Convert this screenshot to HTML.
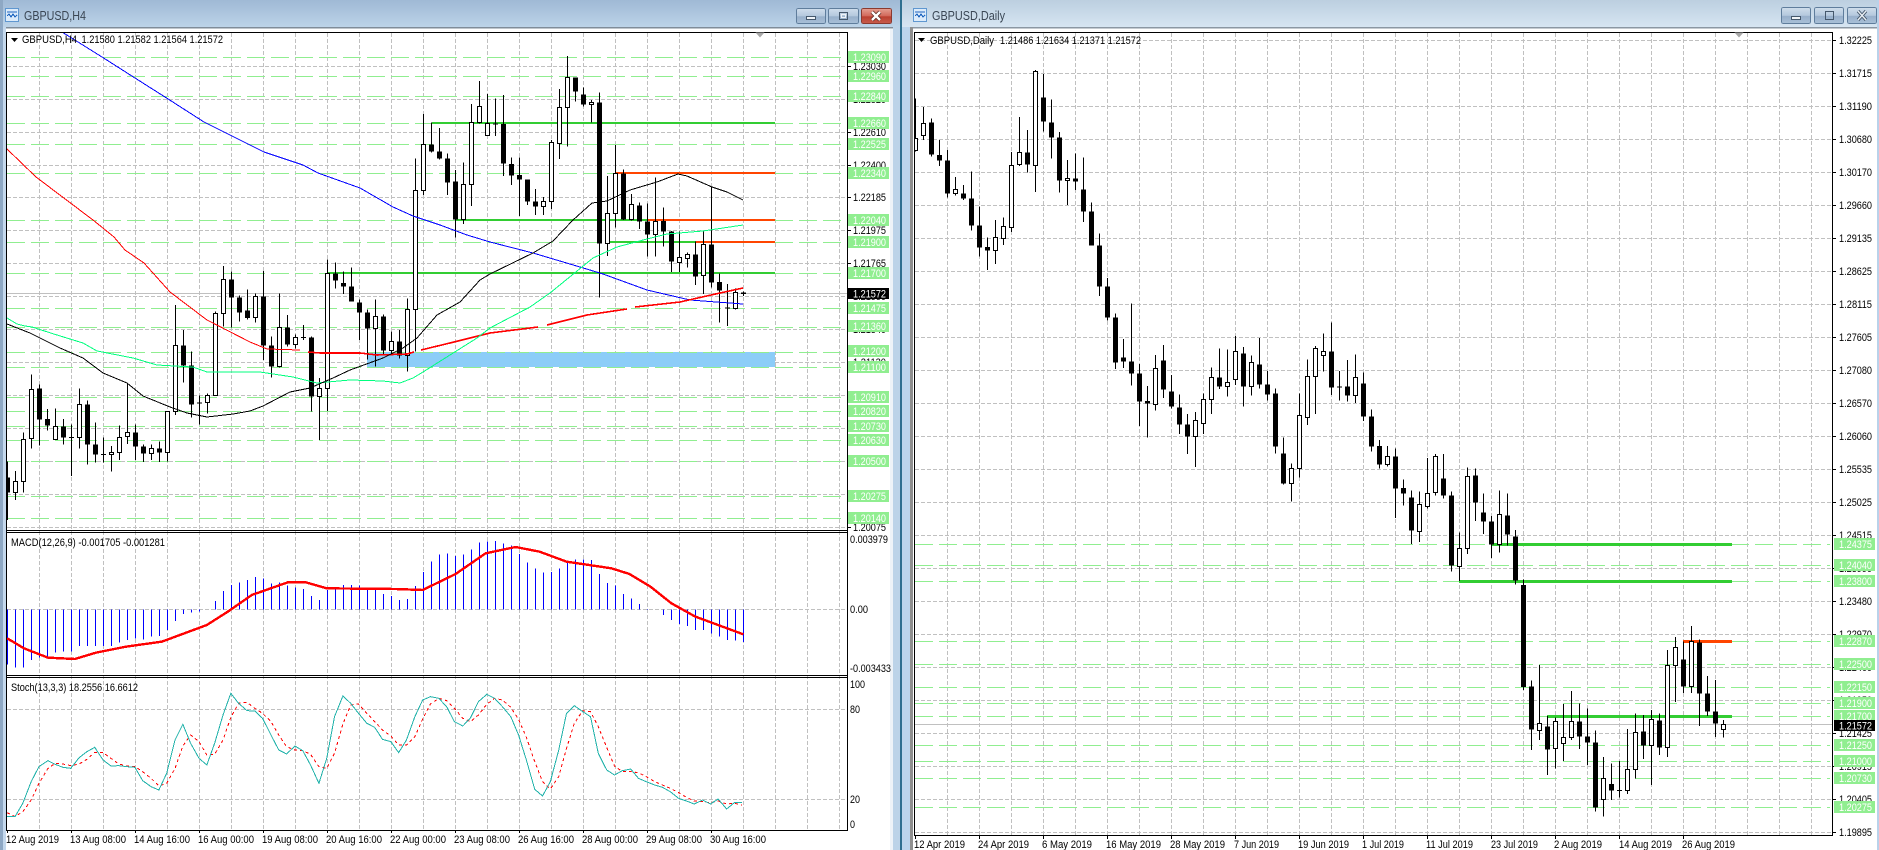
<!DOCTYPE html>
<html><head><meta charset="utf-8"><title>GBPUSD</title>
<style>
html,body{margin:0;padding:0;background:#fff;width:1879px;height:850px;overflow:hidden}
svg{position:absolute;left:0;top:0;display:block}
text{font-family:"Liberation Sans",Arial,sans-serif;font-size:11px;fill:#000}
.tt{font-size:12.5px;fill:#3a4654}
.w text{fill:#fff}
.ne path{vector-effect:non-scaling-stroke;fill:none}
.ne path.h{fill:#fff}
</style></head><body>
<svg width="1879" height="850" viewBox="0 0 1879 850" shape-rendering="crispEdges">
<defs>
<linearGradient id="t1" x1="0" y1="0" x2="0" y2="1"><stop offset="0" stop-color="#9fb9d5"/><stop offset="1" stop-color="#bcd3e8"/></linearGradient>
<linearGradient id="t2" x1="0" y1="0" x2="0" y2="1"><stop offset="0" stop-color="#bccfe0"/><stop offset="1" stop-color="#d6e5f2"/></linearGradient>
<linearGradient id="b1" x1="0" y1="0" x2="0" y2="1"><stop offset="0" stop-color="#d0deec"/><stop offset=".5" stop-color="#b4c8dd"/><stop offset=".55" stop-color="#98b0cb"/><stop offset="1" stop-color="#a9c0d8"/></linearGradient>
<linearGradient id="b2" x1="0" y1="0" x2="0" y2="1"><stop offset="0" stop-color="#e4a093"/><stop offset=".5" stop-color="#d2685a"/><stop offset=".55" stop-color="#bb4030"/><stop offset="1" stop-color="#c85c4c"/></linearGradient>
<clipPath id="cl"><rect x="7" y="33" width="840" height="497"/></clipPath>
<clipPath id="cr"><rect x="915" y="33" width="917" height="802"/></clipPath>
</defs>
<rect width="1879" height="850" fill="#fff"/>
<!-- left window frame -->
<rect x="0" y="0" width="900" height="27" fill="url(#t1)"/>
<rect x="0" y="27" width="900" height="1.5" fill="#7f8c99"/>
<rect x="0" y="0" width="3" height="850" fill="#8ea8c4"/>
<rect x="3" y="27" width="3" height="823" fill="#c4d8ec"/>
<rect x="893" y="27" width="7" height="823" fill="#bcd3e8"/>
<rect x="890" y="29" width="3" height="821" fill="#eef3f8"/>
<!-- right window frame -->
<rect x="900" y="0" width="979" height="27" fill="url(#t2)"/>
<rect x="900" y="27" width="979" height="1.5" fill="#8b97a3"/>
<rect x="900" y="0" width="2" height="850" fill="#2f6f8f"/>
<rect x="902" y="27" width="8" height="823" fill="#bcd5ec"/>
<rect x="910" y="27" width="3" height="823" fill="#8f8f8f"/>
<rect x="1877" y="0" width="2" height="850" fill="#b9d2ea"/>

<!-- title icons -->
<g>
<rect x="5.5" y="8.5" width="13" height="13" fill="#dcebfa" stroke="#5f97d0"/>
<path d="M7 12h10M7 16l2-2 2 3 2-3 2 3 2-2" fill="none" stroke="#1f66c0"/>
<rect x="913.5" y="8.5" width="13" height="13" fill="#dcebfa" stroke="#5f97d0"/>
<path d="M915 12h10M915 16l2-2 2 3 2-3 2 3 2-2" fill="none" stroke="#1f66c0"/>
</g>
<text class="tt" x="24" y="20" textLength="62" lengthAdjust="spacingAndGlyphs">GBPUSD,H4</text>
<text class="tt" x="932" y="20" textLength="73" lengthAdjust="spacingAndGlyphs">GBPUSD,Daily</text>

<!-- window buttons -->
<g stroke="#5f7d9c">
<rect x="796.5" y="8.5" width="29" height="15" rx="2" fill="url(#b1)"/>
<rect x="828.5" y="8.5" width="30" height="15" rx="2" fill="url(#b1)"/>
<rect x="861.5" y="8.5" width="30" height="15" rx="2" fill="url(#b2)" stroke="#8a3a30"/>
<rect x="1781.5" y="7.5" width="29" height="16" rx="2" fill="url(#b1)"/>
<rect x="1814.5" y="7.5" width="29" height="16" rx="2" fill="url(#b1)"/>
<rect x="1847.5" y="7.5" width="29" height="16" rx="2" fill="url(#b1)"/>
</g>
<g fill="#f0f4f8" stroke="#45586c">
<rect x="806.5" y="16.5" width="9" height="3"/>
<rect x="839.5" y="12.5" width="8" height="7" fill="none"/><rect x="841.5" y="14.5" width="4" height="3" fill="none" stroke="#f0f4f8"/>
<rect x="1791.5" y="16.5" width="9" height="3"/>
<rect x="1825.5" y="11.5" width="8" height="8" fill="none"/>
</g>
<g fill="none" shape-rendering="auto">
<path d="M872 12l8 8M880 12l-8 8" stroke="#5a2a24" stroke-width="4"/>
<path d="M872 12l8 8M880 12l-8 8" stroke="#fff" stroke-width="2.4"/>
<path d="M1858 11l8 9M1866 11l-8 9" stroke="#45586c" stroke-width="3.2"/>
<path d="M1858 11l8 9M1866 11l-8 9" stroke="#e8eef4" stroke-width="1.4"/>
</g>

<!-- LEFT CHART grid -->
<g fill="none" stroke="#c0c0c0" stroke-dasharray="4 2">
<path d="M7 66.5H847M7 99.5H847M7 132.5H847M7 165.5H847M7 197.5H847M7 230.5H847M7 263.5H847M7 296.5H847M7 329.5H847M7 362.5H847M7 395.5H847M7 428.5H847M7 461.5H847M7 494.5H847M7 527.5H847M7 609.5H847M7 709.5H847M7 799.5H847"/>
<path d="M39.5 33V830M71.5 33V830M103.5 33V830M135.5 33V830M167.5 33V830M199.5 33V830M231.5 33V830M263.5 33V830M295.5 33V830M327.5 33V830M359.5 33V830M391.5 33V830M423.5 33V830M455.5 33V830M487.5 33V830M519.5 33V830M551.5 33V830M583.5 33V830M615.5 33V830M647.5 33V830M679.5 33V830M711.5 33V830M743.5 33V830M775.5 33V830M807.5 33V830M839.5 33V830"/>
</g>
<path d="M7 293.5H847" stroke="#c0c0c0" fill="none"/>
<rect x="367" y="352" width="408" height="15" fill="#8ccdf8"/>
<path fill="none" stroke="#90ee90" stroke-dasharray="18 6" d="M7 57.5H843M7 76.5H843M7 96.5H843M7 123.5H843M7 144.5H843M7 173.5H843M7 220.5H843M7 242.5H843M7 273.5H843M7 308.5H843M7 327.5H843M7 352.5H843M7 367.5H843M7 397.5H843M7 411.5H843M7 426.5H843M7 440.5H843M7 461.5H843M7 496.5H843M7 518.5H843"/>
<g fill="#32cd32">
<rect x="432" y="122" width="343" height="2"/><rect x="456" y="219" width="192" height="2"/><rect x="607" y="241" width="89" height="2"/><rect x="327" y="272" width="448" height="2"/>
</g>
<g fill="#ff4500">
<rect x="616" y="172" width="159" height="2"/><rect x="648" y="219" width="127" height="2"/><rect x="696" y="241" width="79" height="2"/>
</g>

<g clip-path="url(#cl)">
<g class="ne" transform="translate(0 250) scale(1 .33333)">
<path stroke="#000" d="M7.5 635V810M15.5 663V750M23.5 547V728M31.5 373V596M39.5 403V587M47.5 477V542M55.5 475V568M63.5 507V584M71.5 523V678M79.5 415V596M87.5 451V644M95.5 517V638M103.5 562V638M111.5 588V665M119.5 526V630M127.5 400V582M135.5 523V630M143.5 583V636M151.5 583V630M159.5 574V636M167.5 484V634M175.5 165V495M183.5 240V398M191.5 304V503M199.5 436V524M207.5 430V491M215.5 184V436M223.5 48V230M231.5 64V232M239.5 137V215M247.5 118V208"/>
<path stroke="#000" style="stroke-width:5" d="M7.5 682V728M39.5 415V509M47.5 507V527M63.5 529V563M71.5 561V564M87.5 463V584M95.5 583V614M103.5 612V615M135.5 547V590M143.5 589V611M159.5 595V608M183.5 286V347M191.5 346V464M199.5 457V461M231.5 88V143M239.5 142V188M247.5 181V204"/>
<path class="h" stroke="#000" d="M13.5 694h4V728h-4zM21.5 568h4V694h-4zM29.5 418h4V565h-4zM53.5 529h4V568h-4zM77.5 463h4V563h-4zM109.5 607h4V613h-4zM117.5 562h4V607h-4zM125.5 547h4V560h-4zM149.5 595h4V611h-4zM165.5 484h4V608h-4zM173.5 286h4V484h-4zM205.5 436h4V458h-4zM213.5 190h4V436h-4zM221.5 88h4V190h-4z"/>
</g>
<g class="ne" transform="translate(0 100) scale(1 .33333)">
<path stroke="#000" d="M255.5 580V668M263.5 513V780M271.5 709V833M279.5 580V803M287.5 645V740M295.5 703V745M303.5 675V720M311.5 710V935M319.5 834V1020M327.5 478V933M335.5 487V566M343.5 514V582M351.5 502V605M359.5 598V720M367.5 628V778M375.5 598V800M383.5 643V765M391.5 694V760M399.5 690V776M407.5 595V815M415.5 175V755M423.5 42V285M431.5 68V158M439.5 84V178M447.5 160V285M455.5 210V413M463.5 187V372M471.5 12V318M479.5 -57V70M487.5 -18V108"/>
<path stroke="#000" style="stroke-width:5" d="M263.5 589V736M271.5 736V800M287.5 682V734M303.5 711V714M311.5 712V890M335.5 520V542M343.5 549V560M351.5 559V605M359.5 607V638M367.5 637V686M383.5 649V752M399.5 724V766M431.5 133V155M439.5 154V176M447.5 175V248M455.5 244V359"/>
<path class="h" stroke="#000" d="M253.5 589h4V652h-4zM277.5 682h4V800h-4zM293.5 712h4V733h-4zM317.5 865h4V890h-4zM325.5 520h4V865h-4zM373.5 649h4V685h-4zM389.5 724h4V751h-4zM405.5 628h4V766h-4zM413.5 271h4V628h-4zM421.5 133h4V271h-4zM461.5 253h4V358h-4zM469.5 68h4V253h-4zM477.5 19h4V68h-4zM485.5 70h4V106h-4z"/>
</g>
<g class="ne" transform="translate(0 50) scale(1 .33333)">
<path stroke="#000" d="M495.5 145V258M503.5 135V378M511.5 322V405M519.5 323V498M527.5 388V465M535.5 417V495M543.5 441V495M551.5 270V477M559.5 117V327M567.5 18V290M575.5 82V155M583.5 112V170M591.5 150V218M599.5 127V743M607.5 378V618M615.5 285V533M623.5 358V510M631.5 432V512M639.5 458V537M647.5 460V620M655.5 382V620M663.5 472V590M671.5 543V666M679.5 545V666M687.5 608V653M695.5 575V705M703.5 543V732M711.5 410V713M719.5 670V818M727.5 702V828M735.5 715V778M743.5 725V738"/>
<path stroke="#000" style="stroke-width:5" d="M495.5 220V224M503.5 222V341M511.5 342V377M519.5 375V389M527.5 388V455M535.5 454V470M575.5 82V125M583.5 133V164M599.5 157V580M623.5 370V509M639.5 466V515M647.5 514V554M663.5 513V545M671.5 544V635M695.5 613V680M711.5 583V698M719.5 696V722M727.5 772V776M743.5 727V732"/>
<path class="h" stroke="#000" d="M541.5 455h4V469h-4zM549.5 277h4V455h-4zM557.5 172h4V281h-4zM565.5 82h4V172h-4zM589.5 157h4V163h-4zM605.5 490h4V580h-4zM613.5 370h4V490h-4zM629.5 463h4V509h-4zM653.5 514h4V554h-4zM677.5 622h4V637h-4zM685.5 613h4V626h-4zM701.5 583h4V677h-4zM733.5 727h4V776h-4z"/>
</g>
<!-- moving averages -->
<path fill="none" stroke="#0000ff" d="M62 32L102 57L135 78L165 97L204 122L250 145L264 152L303 165L318 173L360 188L393 207L413 216L440 225L467 235L490 242L533 253L580 267L603 274L647 290L690 300L743 304"/>
<path fill="none" stroke="#ff0000" d="M7 149L36 177L93 220L114 237L125 250L144 263L170 292L207 320L250 342L267 349L300 350"/>
<path fill="none" stroke="#ff0000" stroke-width="1.6" d="M308 352L320 353L360 353L377 355L407 354L414 352M421 350L450 343L490 333L538 327M547 325L587 315L627 309M635 307L680 302L720 293L743 288"/>
<path fill="none" stroke="#00ff7f" d="M7 318L17 324L25 326L32 327L57 335L83 343L97 351L133 358L157 365L193 367L207 372L260 372L293 377L317 383L350 380L383 381L400 383L413 378L423 372L450 355L477 338L490 328L530 307L550 293L593 258L617 247L647 239L667 234L703 231L743 225"/>
<path fill="none" stroke="#000" d="M7 324L30 333L60 348L83 358L103 373L127 383L143 396L170 407L187 413L207 417L233 414L250 411L263 406L290 392L310 388L333 378L350 370L383 358L403 348L417 338L437 315L460 302L480 280L490 274L533 253L553 241L573 220L592 203L607 201L630 190L657 182L678 174L687 176L712 187L727 192L743 200"/>
</g>
<!-- MACD -->
<g class="ne" transform="translate(0 420) scale(1 .33333)">
<path stroke="#0000ff" d="M7.5 568V733M15.5 568V743M23.5 568V742M31.5 568V720M39.5 568V712M47.5 568V710M55.5 568V698M63.5 568V695M71.5 568V695M79.5 568V678M87.5 568V678M95.5 568V678M103.5 568V678M111.5 568V678M119.5 568V668M127.5 568V660M135.5 568V655M143.5 568V658M151.5 568V650M159.5 568V648M167.5 568V630M175.5 568V603M183.5 568V582M191.5 568V578M199.5 568V575M215.5 568V543M223.5 568V513M231.5 568V495M239.5 568V487M247.5 568V480M255.5 568V471M263.5 568V475M271.5 568V490M279.5 568V488M287.5 568V497M295.5 568V503M303.5 568V507M311.5 568V528M319.5 568V540M327.5 568V510M335.5 568V503M343.5 568V495M351.5 568V495M359.5 568V497M367.5 568V508M375.5 568V510M383.5 568V522M391.5 568V528M399.5 568V540M407.5 568V537M415.5 568V498M423.5 568V456M431.5 568V425M439.5 568V404M447.5 568V400M455.5 568V408M463.5 568V403M471.5 568V388M479.5 568V368M487.5 568V365M495.5 568V363M503.5 568V370M511.5 568V377M519.5 568V402M527.5 568V427M535.5 568V445M543.5 568V458M551.5 568V456M559.5 568V445M567.5 568V425M575.5 568V418M583.5 568V418M591.5 568V420M599.5 568V462M607.5 568V489M615.5 568V497M623.5 568V522M631.5 568V535M639.5 568V552M647.5 568V567M663.5 568V585M671.5 568V600M679.5 568V612M687.5 568V618M695.5 568V630M703.5 568V630M711.5 568V640M719.5 568V650M727.5 568V660M735.5 568V662M743.5 568V666"/>
</g>
<g class="ne" transform="translate(0 420) scale(.5995 .33333)">
<path stroke="#ff0000" style="stroke-width:2.4" d="M12 655L40 685L80 713L125 717L160 698L210 680L270 665L300 645L345 615L380 575L420 525L480 487L510 487L545 505L660 507L705 510L760 462L810 400L860 381L900 395L945 425L1020 445L1050 462L1085 500L1120 550L1160 590L1240 643"/>
<path stroke="#ff0000" style="stroke-dasharray:3 3" d="M12 1178L25 1190L38 1175L52 1140L65 1090L80 1045L92 1030L105 1032L118 1037L132 1032L145 1018L158 997L172 998L185 1015L198 1032L212 1038L225 1040L238 1055L252 1075L265 1098L278 1090L292 1045L305 978L318 945L332 965L345 1005L358 1003L372 960L385 892L398 850L412 847L425 865L438 880L452 905L465 945L478 980L492 990L505 992L518 1003L532 1040L545 1045L558 1000L572 912L585 855L598 852L612 880L625 905L638 930L652 948L665 975L678 975L692 950L705 897L718 852L732 835L745 842L758 865L772 895L785 905L798 885L812 853L825 835L838 840L852 862L865 898L878 952L892 1025L905 1085L918 1107L932 1070L945 985L958 910L972 872L985 875L998 920L1012 982L1025 1038L1038 1055L1052 1055L1065 1058L1078 1070L1092 1085L1105 1095L1118 1105L1132 1118L1145 1132L1158 1143L1172 1145L1185 1148L1198 1143L1212 1152L1225 1150L1238 1155"/>
<path stroke="#20b2aa" d="M12 1190L25 1190L38 1150L52 1085L65 1040L80 1022L92 1033L105 1042L118 1045L132 1013L145 995L158 982L172 1020L185 1038L198 1037L212 1040L225 1042L238 1082L252 1100L265 1110L278 1060L292 960L305 913L318 970L332 1015L345 1035L358 970L372 885L385 820L398 850L412 872L425 873L438 895L452 945L465 990L478 1002L492 978L505 992L518 1035L532 1090L545 1015L558 890L572 828L585 850L598 880L612 910L625 922L638 958L652 965L665 998L678 960L692 890L705 840L718 830L732 835L745 860L758 905L772 918L785 893L798 845L812 823L825 835L838 860L852 890L865 945L878 1020L892 1108L905 1128L918 1085L932 990L945 880L958 857L972 875L985 890L998 1000L1012 1050L1025 1065L1038 1052L1052 1047L1065 1075L1078 1085L1092 1095L1105 1102L1118 1115L1132 1135L1145 1143L1158 1152L1172 1140L1185 1152L1198 1137L1212 1167L1225 1148L1238 1148"/>
</g>
<!-- left frames -->
<g fill="#000">
<rect x="6" y="32" width="1" height="798"/>
<rect x="847" y="32" width="1" height="798"/>
<rect x="6" y="32" width="842" height="1"/>
<rect x="6" y="530" width="842" height="1"/><rect x="6" y="532" width="842" height="1"/>
<rect x="6" y="675" width="842" height="1"/><rect x="6" y="677" width="842" height="1"/>
<rect x="6" y="830" width="842" height="1"/>
</g>
<path d="M848 66.5h3M848 99.5h3M848 132.5h3M848 165.5h3M848 197.5h3M848 230.5h3M848 263.5h3M848 296.5h3M848 329.5h3M848 362.5h3M848 395.5h3M848 428.5h3M848 461.5h3M848 494.5h3M848 527.5h3M7.5 831v2M71.5 831v2M135.5 831v2M199.5 831v2M263.5 831v2M327.5 831v2M391.5 831v2M455.5 831v2M519.5 831v2M583.5 831v2M647.5 831v2M711.5 831v2" stroke="#000" fill="none"/>
<path d="M755.5 32.5h9l-4.5 5z" fill="#a8a8a8" shape-rendering="auto"/>
<path d="M11 38h7l-3.5 4z" fill="#000" shape-rendering="auto"/>
<text x="22" y="43" textLength="55" lengthAdjust="spacingAndGlyphs">GBPUSD,H4</text>
<text x="81.500" y="43" textLength="141.500" lengthAdjust="spacingAndGlyphs">1.21580 1.21582 1.21564 1.21572</text>
<text x="11" y="546" textLength="154" lengthAdjust="spacingAndGlyphs">MACD(12,26,9) -0.001705 -0.001281</text>
<text x="11" y="691" textLength="127" lengthAdjust="spacingAndGlyphs">Stoch(13,3,3) 18.2556 16.6612</text>
<!-- left axis -->
<g>
<text x="853" y="70" textLength="33" lengthAdjust="spacingAndGlyphs">1.23030</text>
<text x="853" y="103" textLength="33" lengthAdjust="spacingAndGlyphs">1.22820</text>
<text x="853" y="136" textLength="33" lengthAdjust="spacingAndGlyphs">1.22610</text>
<text x="853" y="169" textLength="33" lengthAdjust="spacingAndGlyphs">1.22400</text>
<text x="853" y="201" textLength="33" lengthAdjust="spacingAndGlyphs">1.22185</text>
<text x="853" y="234" textLength="33" lengthAdjust="spacingAndGlyphs">1.21975</text>
<text x="853" y="267" textLength="33" lengthAdjust="spacingAndGlyphs">1.21765</text>
<text x="853" y="300" textLength="33" lengthAdjust="spacingAndGlyphs">1.21550</text>
<text x="853" y="333" textLength="33" lengthAdjust="spacingAndGlyphs">1.21340</text>
<text x="853" y="366" textLength="33" lengthAdjust="spacingAndGlyphs">1.21130</text>
<text x="853" y="399" textLength="33" lengthAdjust="spacingAndGlyphs">1.20915</text>
<text x="853" y="432" textLength="33" lengthAdjust="spacingAndGlyphs">1.20710</text>
<text x="853" y="465" textLength="33" lengthAdjust="spacingAndGlyphs">1.20500</text>
<text x="853" y="498" textLength="33" lengthAdjust="spacingAndGlyphs">1.20285</text>
<text x="853" y="531" textLength="33" lengthAdjust="spacingAndGlyphs">1.20075</text>
<text x="850" y="543" textLength="38" lengthAdjust="spacingAndGlyphs">0.003979</text>
<text x="850" y="613" textLength="18" lengthAdjust="spacingAndGlyphs">0.00</text>
<text x="850" y="672" textLength="41" lengthAdjust="spacingAndGlyphs">-0.003433</text>
<text x="850" y="688" textLength="15" lengthAdjust="spacingAndGlyphs">100</text>
<text x="850" y="713" textLength="10" lengthAdjust="spacingAndGlyphs">80</text>
<text x="850" y="803" textLength="10" lengthAdjust="spacingAndGlyphs">20</text>
<text x="850" y="828" textLength="5" lengthAdjust="spacingAndGlyphs">0</text>
</g>
<g fill="#90ee90">
<rect x="848" y="51" width="41" height="12"/><rect x="848" y="70" width="41" height="12"/><rect x="848" y="90" width="41" height="12"/><rect x="848" y="117" width="41" height="12"/><rect x="848" y="138" width="41" height="12"/><rect x="848" y="167" width="41" height="12"/><rect x="848" y="214" width="41" height="12"/><rect x="848" y="236" width="41" height="12"/><rect x="848" y="267" width="41" height="12"/><rect x="848" y="302" width="41" height="12"/><rect x="848" y="320" width="41" height="12"/><rect x="848" y="345" width="41" height="12"/><rect x="848" y="361" width="41" height="12"/><rect x="848" y="391" width="41" height="12"/><rect x="848" y="405" width="41" height="12"/><rect x="848" y="420" width="41" height="12"/><rect x="848" y="434" width="41" height="12"/><rect x="848" y="455" width="41" height="12"/><rect x="848" y="490" width="41" height="12"/><rect x="848" y="512" width="41" height="12"/>
</g>
<rect x="848" y="288" width="41" height="11" fill="#000"/>
<g class="w">
<text x="853" y="61" textLength="33" lengthAdjust="spacingAndGlyphs">1.23090</text>
<text x="853" y="80" textLength="33" lengthAdjust="spacingAndGlyphs">1.22960</text>
<text x="853" y="100" textLength="33" lengthAdjust="spacingAndGlyphs">1.22840</text>
<text x="853" y="127" textLength="33" lengthAdjust="spacingAndGlyphs">1.22660</text>
<text x="853" y="148" textLength="33" lengthAdjust="spacingAndGlyphs">1.22525</text>
<text x="853" y="177" textLength="33" lengthAdjust="spacingAndGlyphs">1.22340</text>
<text x="853" y="224" textLength="33" lengthAdjust="spacingAndGlyphs">1.22040</text>
<text x="853" y="246" textLength="33" lengthAdjust="spacingAndGlyphs">1.21900</text>
<text x="853" y="277" textLength="33" lengthAdjust="spacingAndGlyphs">1.21700</text>
<text x="853" y="297.500" textLength="33" lengthAdjust="spacingAndGlyphs">1.21572</text>
<text x="853" y="312" textLength="33" lengthAdjust="spacingAndGlyphs">1.21475</text>
<text x="853" y="330" textLength="33" lengthAdjust="spacingAndGlyphs">1.21360</text>
<text x="853" y="355" textLength="33" lengthAdjust="spacingAndGlyphs">1.21200</text>
<text x="853" y="371" textLength="33" lengthAdjust="spacingAndGlyphs">1.21100</text>
<text x="853" y="401" textLength="33" lengthAdjust="spacingAndGlyphs">1.20910</text>
<text x="853" y="415" textLength="33" lengthAdjust="spacingAndGlyphs">1.20820</text>
<text x="853" y="430" textLength="33" lengthAdjust="spacingAndGlyphs">1.20730</text>
<text x="853" y="444" textLength="33" lengthAdjust="spacingAndGlyphs">1.20630</text>
<text x="853" y="465" textLength="33" lengthAdjust="spacingAndGlyphs">1.20500</text>
<text x="853" y="500" textLength="33" lengthAdjust="spacingAndGlyphs">1.20275</text>
<text x="853" y="522" textLength="33" lengthAdjust="spacingAndGlyphs">1.20140</text>
</g>
<!-- left time axis -->
<g>
<text x="6" y="843" textLength="53" lengthAdjust="spacingAndGlyphs">12 Aug 2019</text>
<text x="70" y="843" textLength="56" lengthAdjust="spacingAndGlyphs">13 Aug 08:00</text>
<text x="134" y="843" textLength="56" lengthAdjust="spacingAndGlyphs">14 Aug 16:00</text>
<text x="198" y="843" textLength="56" lengthAdjust="spacingAndGlyphs">16 Aug 00:00</text>
<text x="262" y="843" textLength="56" lengthAdjust="spacingAndGlyphs">19 Aug 08:00</text>
<text x="326" y="843" textLength="56" lengthAdjust="spacingAndGlyphs">20 Aug 16:00</text>
<text x="390" y="843" textLength="56" lengthAdjust="spacingAndGlyphs">22 Aug 00:00</text>
<text x="454" y="843" textLength="56" lengthAdjust="spacingAndGlyphs">23 Aug 08:00</text>
<text x="518" y="843" textLength="56" lengthAdjust="spacingAndGlyphs">26 Aug 16:00</text>
<text x="582" y="843" textLength="56" lengthAdjust="spacingAndGlyphs">28 Aug 00:00</text>
<text x="646" y="843" textLength="56" lengthAdjust="spacingAndGlyphs">29 Aug 08:00</text>
<text x="710" y="843" textLength="56" lengthAdjust="spacingAndGlyphs">30 Aug 16:00</text>
</g>

<!-- RIGHT CHART -->
<g fill="none" stroke="#c0c0c0" stroke-dasharray="4 2">
<path d="M915 40.500H1832M915 73.500H1832M915 106.500H1832M915 139.500H1832M915 172.500H1832M915 205.500H1832M915 238.500H1832M915 271.500H1832M915 304.500H1832M915 337.500H1832M915 370.500H1832M915 403.500H1832M915 436.500H1832M915 469.500H1832M915 502.500H1832M915 535.500H1832M915 568.500H1832M915 601.500H1832M915 634.500H1832M915 667.500H1832M915 700.500H1832M915 733.500H1832M915 766.500H1832M915 799.500H1832M915 832.500H1832"/>
<path d="M947.500 33V835M979.500 33V835M1011.500 33V835M1043.500 33V835M1075.500 33V835M1107.500 33V835M1139.500 33V835M1171.500 33V835M1203.500 33V835M1235.500 33V835M1267.500 33V835M1299.500 33V835M1331.500 33V835M1363.500 33V835M1395.500 33V835M1427.500 33V835M1459.500 33V835M1491.500 33V835M1523.500 33V835M1555.500 33V835M1587.500 33V835M1619.500 33V835M1651.500 33V835M1683.500 33V835M1715.500 33V835M1747.500 33V835M1779.500 33V835M1811.500 33V835"/>
</g>
<path d="M915 724.500H1832" stroke="#c0c0c0" fill="none"/>
<path fill="none" stroke="#90ee90" stroke-dasharray="18 6" d="M915 544.500H1830M915 565.500H1830M915 581.500H1830M915 641.500H1830M915 664.500H1830M915 687.500H1830M915 703.500H1830M915 716.500H1830M915 745.500H1830M915 761.500H1830M915 778.500H1830M915 807.500H1830"/>
<g fill="#32cd32">
<rect x="1492" y="543" width="240" height="3"/><rect x="1459" y="580" width="273" height="3"/><rect x="1547" y="715" width="185" height="3"/>
</g>
<rect x="1683" y="640" width="49" height="3" fill="#ff4500"/>

<g clip-path="url(#cr)">
<g class="ne" transform="translate(0 60) scale(1 .33333)">
<path stroke="#000" d="M915.500 115V275M923.500 141V240M931.500 175V290M939.500 240V318M947.500 270V413M955.500 351V407M963.500 375V420M971.500 334V512M979.500 440V590M987.500 532V630M995.500 480V612M1003.500 472V555M1011.500 276V516M1019.500 171V318M1027.500 210V338M1035.500 30V396M1043.500 42V215M1051.500 118V296M1059.500 216V398M1067.500 300V435M1075.500 280V390M1083.500 292V486M1091.500 427V557M1099.500 520V708M1107.500 654V782M1115.500 760V927M1123.500 837V924M1131.500 730V977M1139.500 912V1098M1147.500 978V1133M1155.500 885V1052M1163.500 855V1014M1171.500 945V1045M1179.500 1003V1122M1187.500 1062V1182M1195.500 1056V1221M1203.500 1000V1122M1211.500 922V1062M1219.500 865V987M1227.500 868V1010"/>
<path stroke="#000" style="stroke-width:5" d="M931.500 187V284M939.500 285V302M947.500 301V401M963.500 400V416M971.500 415V497M979.500 496V563M987.500 561V572M1027.500 277V314M1043.500 112V185M1051.500 187V233M1059.500 232V362M1075.500 355V365M1083.500 388V455M1091.500 454V557M1099.500 556V680M1107.500 679V773M1115.500 772V908M1123.500 892V905M1131.500 904V941M1139.500 940V1025M1147.500 1023V1031M1163.500 901V989M1171.500 994V1040M1179.500 1042V1094M1187.500 1093V1130M1219.500 952V980"/>
<path class="h" stroke="#000" d="M913.500 236h4V272h-4zM921.500 190h4V227h-4zM953.500 388h4V401h-4zM993.500 532h4V571h-4zM1001.500 500h4V535h-4zM1009.500 317h4V502h-4zM1017.500 277h4V314h-4zM1033.500 34h4V317h-4zM1065.500 355h4V361h-4zM1153.500 925h4V1033h-4zM1193.500 1081h4V1130h-4zM1201.500 1018h4V1090h-4zM1209.500 952h4V1018h-4zM1225.500 967h4V979h-4z"/>
</g>
<g class="ne" transform="translate(0 310) scale(1 .33333)">
<path stroke="#000" d="M1235.500 78V225M1243.500 111V290M1251.500 136V257M1259.500 84V236M1267.500 183V272M1275.500 235V431M1283.500 382V524M1291.500 460V575M1299.500 250V503M1307.500 148V345M1315.500 108V312M1323.500 70V185M1331.500 37V255M1339.500 183V272M1347.500 150V275M1355.500 133V279M1363.500 187V333M1371.500 298V425M1379.500 390V476M1387.500 408V470M1395.500 415V624M1403.500 508V587M1411.500 541V702M1419.500 544V696M1427.500 444V596M1435.500 432V557M1443.500 432V566M1451.500 544V785M1459.500 667V813M1467.500 472V732M1475.500 475V633M1483.500 550V672M1491.500 618V744M1499.500 541V728M1507.500 550V707M1515.500 660V824M1523.500 808V930"/>
<path stroke="#000" style="stroke-width:5" d="M1243.500 130V230M1259.500 163V224M1267.500 223V254M1275.500 250V410M1283.500 430V521M1331.500 124V233M1339.500 229V233M1347.500 229V257M1363.500 220V320M1371.500 319V410M1379.500 408V464M1395.500 439V536M1403.500 534V551M1411.500 562V662M1443.500 505V557M1451.500 556V767M1475.500 496V578M1483.500 607V635M1491.500 634V704M1507.500 616V674M1515.500 679V812"/>
<path class="h" stroke="#000" d="M1233.500 124h4V208h-4zM1249.500 157h4V229h-4zM1289.500 475h4V520h-4zM1297.500 316h4V475h-4zM1305.500 199h4V322h-4zM1313.500 115h4V199h-4zM1321.500 124h4V136h-4zM1353.500 202h4V256h-4zM1385.500 439h4V463h-4zM1417.500 583h4V664h-4zM1425.500 550h4V589h-4zM1433.500 439h4V547h-4zM1457.500 715h4V769h-4zM1465.500 499h4V715h-4zM1497.500 613h4V703h-4z"/>
</g>
<g class="ne" transform="translate(0 490) scale(1 .33333)">
<path stroke="#000" d="M1523.500 268V600M1531.500 571V780M1539.500 525V750M1547.500 678V855M1555.500 682V836M1563.500 642V813M1571.500 603V750M1579.500 640V777M1587.500 655V825M1595.500 721V965M1603.500 801V980M1611.500 820V930M1619.500 813V923M1627.500 717V912M1635.500 670V866M1643.500 675V807M1651.500 660V885M1659.500 670V795M1667.500 480V801M1675.500 441V636M1683.500 455V609M1691.500 408V609M1699.500 448V708M1707.500 558V678M1715.500 570V741M1723.500 690V743"/>
<path stroke="#000" style="stroke-width:5" d="M1523.500 285V591M1531.500 589V719M1547.500 709V779M1579.500 694V740M1587.500 739V758M1595.500 757V953M1611.500 882V902M1619.500 900V903M1643.500 724V767M1659.500 691V773M1683.500 508V590M1699.500 457V611M1707.500 610V665M1715.500 664V701"/>
<path class="h" stroke="#000" d="M1537.500 700h4V721h-4zM1553.500 694h4V776h-4zM1561.500 742h4V760h-4zM1569.500 694h4V742h-4zM1601.500 865h4V929h-4zM1625.500 838h4V901h-4zM1633.500 727h4V838h-4zM1649.500 688h4V767h-4zM1665.500 526h4V772h-4zM1673.500 472h4V526h-4zM1689.500 454h4V590h-4zM1721.500 703h4V718h-4z"/>
</g>
</g>
<!-- right frames -->
<g fill="#000">
<rect x="914" y="32" width="1" height="804"/>
<rect x="1832" y="32" width="1" height="804"/>
<rect x="914" y="32" width="919" height="1"/>
<rect x="914" y="835" width="919" height="1"/>
</g>
<path d="M1833 40.500h3M1833 73.500h3M1833 106.500h3M1833 139.500h3M1833 172.500h3M1833 205.500h3M1833 238.500h3M1833 271.500h3M1833 304.500h3M1833 337.500h3M1833 370.500h3M1833 403.500h3M1833 436.500h3M1833 469.500h3M1833 502.500h3M1833 535.500h3M1833 568.500h3M1833 601.500h3M1833 634.500h3M1833 667.500h3M1833 700.500h3M1833 733.500h3M1833 766.500h3M1833 799.500h3M1833 832.500h3M915.500 836v3M979.500 836v3M1043.500 836v3M1107.500 836v3M1171.500 836v3M1235.500 836v3M1299.500 836v3M1363.500 836v3M1427.500 836v3M1491.500 836v3M1555.500 836v3M1619.500 836v3M1683.500 836v3" stroke="#000" fill="none"/>
<path d="M1734.500 32.500h9l-4.500 5z" fill="#a8a8a8" shape-rendering="auto"/>
<path d="M918 38h7l-3.500 4z" fill="#000" shape-rendering="auto"/>
<text x="930" y="44" textLength="64" lengthAdjust="spacingAndGlyphs">GBPUSD,Daily</text>
<text x="1000" y="44" textLength="141" lengthAdjust="spacingAndGlyphs">1.21486 1.21634 1.21371 1.21572</text>
<g>
<text x="1839" y="44" textLength="33" lengthAdjust="spacingAndGlyphs">1.32225</text>
<text x="1839" y="77" textLength="33" lengthAdjust="spacingAndGlyphs">1.31715</text>
<text x="1839" y="110" textLength="33" lengthAdjust="spacingAndGlyphs">1.31190</text>
<text x="1839" y="143" textLength="33" lengthAdjust="spacingAndGlyphs">1.30680</text>
<text x="1839" y="176" textLength="33" lengthAdjust="spacingAndGlyphs">1.30170</text>
<text x="1839" y="209" textLength="33" lengthAdjust="spacingAndGlyphs">1.29660</text>
<text x="1839" y="242" textLength="33" lengthAdjust="spacingAndGlyphs">1.29135</text>
<text x="1839" y="275" textLength="33" lengthAdjust="spacingAndGlyphs">1.28625</text>
<text x="1839" y="308" textLength="33" lengthAdjust="spacingAndGlyphs">1.28115</text>
<text x="1839" y="341" textLength="33" lengthAdjust="spacingAndGlyphs">1.27605</text>
<text x="1839" y="374" textLength="33" lengthAdjust="spacingAndGlyphs">1.27080</text>
<text x="1839" y="407" textLength="33" lengthAdjust="spacingAndGlyphs">1.26570</text>
<text x="1839" y="440" textLength="33" lengthAdjust="spacingAndGlyphs">1.26060</text>
<text x="1839" y="473" textLength="33" lengthAdjust="spacingAndGlyphs">1.25535</text>
<text x="1839" y="506" textLength="33" lengthAdjust="spacingAndGlyphs">1.25025</text>
<text x="1839" y="539" textLength="33" lengthAdjust="spacingAndGlyphs">1.24515</text>
<text x="1839" y="572" textLength="33" lengthAdjust="spacingAndGlyphs">1.23990</text>
<text x="1839" y="605" textLength="33" lengthAdjust="spacingAndGlyphs">1.23480</text>
<text x="1839" y="638" textLength="33" lengthAdjust="spacingAndGlyphs">1.22970</text>
<text x="1839" y="671" textLength="33" lengthAdjust="spacingAndGlyphs">1.22460</text>
<text x="1839" y="704" textLength="33" lengthAdjust="spacingAndGlyphs">1.21950</text>
<text x="1839" y="737" textLength="33" lengthAdjust="spacingAndGlyphs">1.21425</text>
<text x="1839" y="770" textLength="33" lengthAdjust="spacingAndGlyphs">1.20915</text>
<text x="1839" y="803" textLength="33" lengthAdjust="spacingAndGlyphs">1.20405</text>
<text x="1839" y="836" textLength="33" lengthAdjust="spacingAndGlyphs">1.19895</text>
</g>
<g fill="#90ee90">
<rect x="1834" y="538" width="41" height="12"/><rect x="1834" y="559" width="41" height="12"/><rect x="1834" y="575" width="41" height="12"/><rect x="1834" y="635" width="41" height="12"/><rect x="1834" y="658" width="41" height="12"/><rect x="1834" y="681" width="41" height="12"/><rect x="1834" y="697" width="41" height="12"/><rect x="1834" y="710" width="41" height="12"/><rect x="1834" y="739" width="41" height="12"/><rect x="1834" y="755" width="41" height="12"/><rect x="1834" y="772" width="41" height="12"/><rect x="1834" y="801" width="41" height="12"/>
</g>
<rect x="1834" y="720" width="41" height="11" fill="#000"/>
<g class="w">
<text x="1839" y="548" textLength="33" lengthAdjust="spacingAndGlyphs">1.24375</text>
<text x="1839" y="569" textLength="33" lengthAdjust="spacingAndGlyphs">1.24040</text>
<text x="1839" y="585" textLength="33" lengthAdjust="spacingAndGlyphs">1.23800</text>
<text x="1839" y="645" textLength="33" lengthAdjust="spacingAndGlyphs">1.22870</text>
<text x="1839" y="668" textLength="33" lengthAdjust="spacingAndGlyphs">1.22500</text>
<text x="1839" y="691" textLength="33" lengthAdjust="spacingAndGlyphs">1.22150</text>
<text x="1839" y="707" textLength="33" lengthAdjust="spacingAndGlyphs">1.21900</text>
<text x="1839" y="720" textLength="33" lengthAdjust="spacingAndGlyphs">1.21700</text>
<text x="1839" y="729.500" textLength="33" lengthAdjust="spacingAndGlyphs">1.21572</text>
<text x="1839" y="749" textLength="33" lengthAdjust="spacingAndGlyphs">1.21250</text>
<text x="1839" y="765" textLength="33" lengthAdjust="spacingAndGlyphs">1.21000</text>
<text x="1839" y="782" textLength="33" lengthAdjust="spacingAndGlyphs">1.20730</text>
<text x="1839" y="811" textLength="33" lengthAdjust="spacingAndGlyphs">1.20275</text>
</g>
<g>
<text x="914" y="848" textLength="51" lengthAdjust="spacingAndGlyphs">12 Apr 2019</text>
<text x="978" y="848" textLength="51" lengthAdjust="spacingAndGlyphs">24 Apr 2019</text>
<text x="1042" y="848" textLength="50" lengthAdjust="spacingAndGlyphs">6 May 2019</text>
<text x="1106" y="848" textLength="55" lengthAdjust="spacingAndGlyphs">16 May 2019</text>
<text x="1170" y="848" textLength="55" lengthAdjust="spacingAndGlyphs">28 May 2019</text>
<text x="1234" y="848" textLength="45" lengthAdjust="spacingAndGlyphs">7 Jun 2019</text>
<text x="1298" y="848" textLength="51" lengthAdjust="spacingAndGlyphs">19 Jun 2019</text>
<text x="1362" y="848" textLength="42" lengthAdjust="spacingAndGlyphs">1 Jul 2019</text>
<text x="1426" y="848" textLength="47" lengthAdjust="spacingAndGlyphs">11 Jul 2019</text>
<text x="1491" y="848" textLength="47" lengthAdjust="spacingAndGlyphs">23 Jul 2019</text>
<text x="1554" y="848" textLength="48" lengthAdjust="spacingAndGlyphs">2 Aug 2019</text>
<text x="1619" y="848" textLength="53" lengthAdjust="spacingAndGlyphs">14 Aug 2019</text>
<text x="1682" y="848" textLength="53" lengthAdjust="spacingAndGlyphs">26 Aug 2019</text>
</g>
</svg>
</body></html>
